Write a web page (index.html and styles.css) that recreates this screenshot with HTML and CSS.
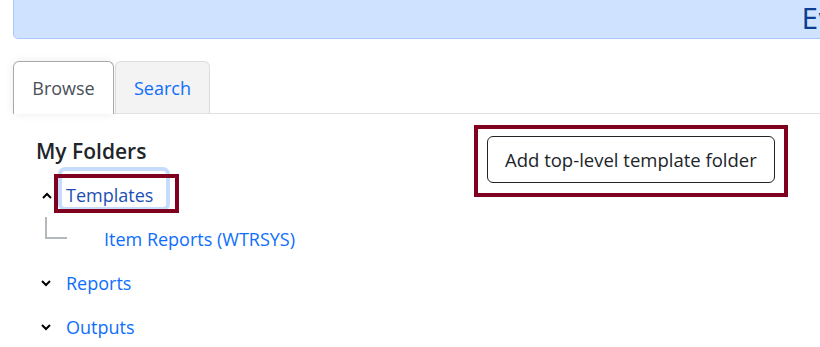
FILE: index.html
```html
<!DOCTYPE html>
<html lang="en">
<head>
  <meta charset="UTF-8" />
  <title>Templates</title>
  <link rel="stylesheet" href="styles.css">
</head>
<body>

  <div class="banner">
    <span class="banner-title">Evaluation Templates</span>
  </div>

  <ul class="tabs">
    <li class="tab active">Browse</li>
    <li class="tab">Search</li>
  </ul>

  <div class="content">
    <div class="folders">
      <h2>My Folders</h2>
      <ul class="tree">
        <li class="row">
          <svg class="chev" width="10" height="7" viewBox="0 0 10 7"><path d="M1 6 L5 2 L9 6" fill="none" stroke="#000" stroke-width="2"/></svg>
          <a href="#" class="focused">Templates</a>
          <span class="highlight"></span>
        </li>
        <li class="row">
          <span class="elbow"></span>
          <a href="#">Item Reports (WTRSYS)</a>
        </li>
        <li class="row">
          <svg class="chev down" width="10" height="7" viewBox="0 0 10 7"><path d="M1 1 L5 5 L9 1" fill="none" stroke="#000" stroke-width="2"/></svg>
          <a href="#">Reports</a>
        </li>
        <li class="row">
          <svg class="chev down" width="10" height="7" viewBox="0 0 10 7"><path d="M1 1 L5 5 L9 1" fill="none" stroke="#000" stroke-width="2"/></svg>
          <a href="#">Outputs</a>
        </li>
      </ul>
    </div>

    <div class="actions">
      <div class="marked-btn">
        <button>Add top-level template folder</button>
      </div>
    </div>
  </div>

</body>
</html>
```

FILE: styles.css
```css
body {
  margin: 0;
  font-family: "Open Sans", "Noto Sans", sans-serif;
  color: #212529;
  background: #fff;
  overflow: hidden;
}
.banner {
  margin-left: 13px;
  width: 1400px;
  height: 39px;
  background: #cfe2ff;
  border: 1px solid #a8c9fb;
  border-top: none;
  border-bottom-left-radius: 5px;
  box-sizing: border-box;
  display: flex;
  align-items: center;
  padding-left: 788px;
}
.banner-title {
  font-family: "Liberation Sans Narrow", "DejaVu Sans Condensed", sans-serif;
  font-size: 28px;
  color: #0b3d91;
  white-space: nowrap;
}
.tabs {
  list-style: none;
  margin: 22px 0 0 13px;
  padding: 0;
  display: flex;
  border-bottom: 1px solid #dee2e6;
  height: 52px;
}
.tab {
  width: 95px;
  box-sizing: border-box;
  text-align: center;
  line-height: 52px;
  font-size: 18px;
  color: #0d6efd;
  background: #f3f3f3;
  border: 1px solid #dcdcdc;
  border-bottom: none;
  border-radius: 6px 6px 0 0;
  margin-right: 1px;
}
.tab.active {
  width: 101px;
  height: 53px;
  color: #495057;
  background: #fff;
  border-color: #a9a9a9;
  box-shadow: 0 0 10px rgba(0, 0, 0, 0.08);
}
.content {
  display: flex;
}
.folders {
  flex: 0 0 474px;
  box-sizing: border-box;
  padding-left: 36px;
}
h2 {
  margin: 24px 0 0;
  font-size: 21px;
  font-weight: 600;
  line-height: 26px;
}
.tree {
  list-style: none;
  margin: 9px 0 0;
  padding: 0;
}
.row {
  position: relative;
  display: flex;
  align-items: center;
  height: 44px;
  font-size: 18px;
}
.chev {
  margin-left: 6px;
  margin-right: 14px;
}
.chev.down {
  margin-left: 5px;
  margin-right: 15px;
}
a {
  color: #0d6efd;
  text-decoration: none;
  line-height: 24px;
}
a.focused {
  color: #1b4fb5;
  margin-left: -8px;
  margin-bottom: 12px;
  padding: 12px 13px 0 4px;
  border: 4px solid #c6dcfd;
  border-radius: 7px;
}
.highlight {
  position: absolute;
  left: 18px;
  top: 1px;
  width: 125px;
  height: 39px;
  box-sizing: border-box;
  border: 4px solid #800020;
  pointer-events: none;
}
.elbow {
  align-self: flex-start;
  box-sizing: border-box;
  width: 22px;
  height: 22px;
  border-left: 2px solid #b3b8bd;
  border-bottom: 2px solid #b3b8bd;
  margin-left: 9px;
  margin-right: 37px;
}
.actions {
  padding-top: 11px;
}
.marked-btn {
  border: 4px solid #800020;
  padding: 7px 9px 10px 9px;
  display: inline-block;
}
button {
  display: block;
  font-family: inherit;
  font-size: 18.5px;
  color: #212529;
  background: #fff;
  border: 1px solid #212529;
  border-radius: 6px;
  height: 47px;
  padding: 0 17px;
}
```
